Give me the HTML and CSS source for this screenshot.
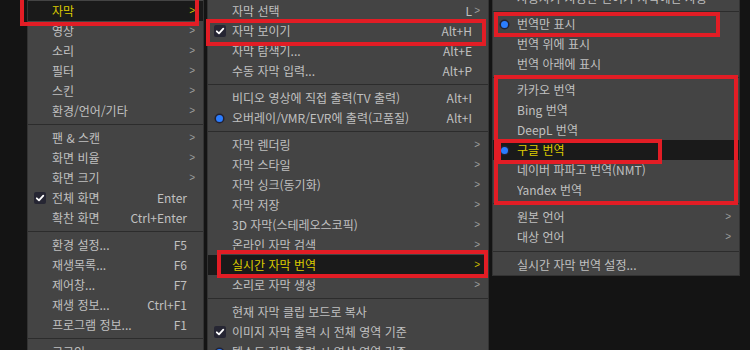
FILE: index.html
```html
<!DOCTYPE html>
<html lang="ko">
<head>
<meta charset="utf-8">
<title>PotPlayer 메뉴</title>
<link rel="stylesheet" href="styles.css">
</head>
<body>
<div class="stage">
  <div class="menu menu-main">
    <div class="item hl"><span class="mark"></span><span class="label">자막</span><span class="key"></span><span class="arrow">&gt;</span></div>
    <div class="item"><span class="mark"></span><span class="label">영상</span><span class="key"></span><span class="arrow">&gt;</span></div>
    <div class="item"><span class="mark"></span><span class="label">소리</span><span class="key"></span><span class="arrow">&gt;</span></div>
    <div class="item"><span class="mark"></span><span class="label">필터</span><span class="key"></span><span class="arrow">&gt;</span></div>
    <div class="item"><span class="mark"></span><span class="label">스킨</span><span class="key"></span><span class="arrow">&gt;</span></div>
    <div class="item"><span class="mark"></span><span class="label">환경/언어/기타</span><span class="key"></span><span class="arrow">&gt;</span></div>
    <div class="sep"></div>
    <div class="item"><span class="mark"></span><span class="label">팬 &amp; 스캔</span><span class="key"></span><span class="arrow">&gt;</span></div>
    <div class="item"><span class="mark"></span><span class="label">화면 비율</span><span class="key"></span><span class="arrow">&gt;</span></div>
    <div class="item"><span class="mark"></span><span class="label">화면 크기</span><span class="key"></span><span class="arrow">&gt;</span></div>
    <div class="item"><span class="mark"><span class="check"><svg viewBox="0 0 12 12" width="12" height="12"><path d="M2.8 6.3 L5 8.4 L9.3 3.6" fill="none" stroke="#fff" stroke-width="1.8" stroke-linecap="round" stroke-linejoin="round"/></svg></span></span><span class="label">전체 화면</span><span class="key">Enter</span><span class="arrow"></span></div>
    <div class="item"><span class="mark"></span><span class="label">확찬 화면</span><span class="key">Ctrl+Enter</span><span class="arrow"></span></div>
    <div class="sep"></div>
    <div class="item"><span class="mark"></span><span class="label">환경 설정...</span><span class="key">F5</span><span class="arrow"></span></div>
    <div class="item"><span class="mark"></span><span class="label">재생목록...</span><span class="key">F6</span><span class="arrow"></span></div>
    <div class="item"><span class="mark"></span><span class="label">제어창...</span><span class="key">F7</span><span class="arrow"></span></div>
    <div class="item"><span class="mark"></span><span class="label">재생 정보...</span><span class="key">Ctrl+F1</span><span class="arrow"></span></div>
    <div class="item"><span class="mark"></span><span class="label">프로그램 정보...</span><span class="key">F1</span><span class="arrow"></span></div>
    <div class="sep"></div>
    <div class="item"><span class="mark"></span><span class="label">로그인</span><span class="key"></span><span class="arrow"></span></div>
  </div>

  <div class="menu menu-sub">
    <div class="item"><span class="mark"></span><span class="label">자막 선택</span><span class="key">L</span><span class="arrow">&gt;</span></div>
    <div class="item"><span class="mark"><span class="check"><svg viewBox="0 0 12 12" width="12" height="12"><path d="M2.8 6.3 L5 8.4 L9.3 3.6" fill="none" stroke="#fff" stroke-width="1.8" stroke-linecap="round" stroke-linejoin="round"/></svg></span></span><span class="label">자막 보이기</span><span class="key">Alt+H</span><span class="arrow"></span></div>
    <div class="item"><span class="mark"></span><span class="label">자막 탐색기...</span><span class="key">Alt+E</span><span class="arrow"></span></div>
    <div class="item"><span class="mark"></span><span class="label">수동 자막 입력...</span><span class="key">Alt+P</span><span class="arrow"></span></div>
    <div class="sep"></div>
    <div class="item"><span class="mark"></span><span class="label">비디오 영상에 직접 출력(TV 출력)</span><span class="key">Alt+I</span><span class="arrow"></span></div>
    <div class="item"><span class="mark"><span class="dot"></span></span><span class="label">오버레이/VMR/EVR에 출력(고품질)</span><span class="key">Alt+I</span><span class="arrow"></span></div>
    <div class="sep"></div>
    <div class="item"><span class="mark"></span><span class="label">자막 렌더링</span><span class="key"></span><span class="arrow">&gt;</span></div>
    <div class="item"><span class="mark"></span><span class="label">자막 스타일</span><span class="key"></span><span class="arrow">&gt;</span></div>
    <div class="item"><span class="mark"></span><span class="label">자막 싱크(동기화)</span><span class="key"></span><span class="arrow">&gt;</span></div>
    <div class="item"><span class="mark"></span><span class="label">자막 저장</span><span class="key"></span><span class="arrow">&gt;</span></div>
    <div class="item"><span class="mark"></span><span class="label">3D 자막(스테레오스코픽)</span><span class="key"></span><span class="arrow">&gt;</span></div>
    <div class="item"><span class="mark"></span><span class="label">온라인 자막 검색</span><span class="key"></span><span class="arrow">&gt;</span></div>
    <div class="item hl"><span class="mark"></span><span class="label">실시간 자막 번역</span><span class="key"></span><span class="arrow">&gt;</span></div>
    <div class="item"><span class="mark"></span><span class="label">소리로 자막 생성</span><span class="key"></span><span class="arrow">&gt;</span></div>
    <div class="sep"></div>
    <div class="item"><span class="mark"></span><span class="label">현재 자막 클립 보드로 복사</span><span class="key"></span><span class="arrow"></span></div>
    <div class="item"><span class="mark"><span class="check"><svg viewBox="0 0 12 12" width="12" height="12"><path d="M2.8 6.3 L5 8.4 L9.3 3.6" fill="none" stroke="#fff" stroke-width="1.8" stroke-linecap="round" stroke-linejoin="round"/></svg></span></span><span class="label">이미지 자막 출력 시 전체 영역 기준</span><span class="key"></span><span class="arrow"></span></div>
    <div class="item"><span class="mark"><span class="dot"></span></span><span class="label">텍스트 자막 출력 시 영상 영역 기준</span><span class="key"></span><span class="arrow"></span></div>
  </div>

  <div class="menu menu-trans">
    <div class="item"><span class="mark"></span><span class="label">사용자가 지정한 언어가 자막에만 사용</span><span class="key"></span><span class="arrow"></span></div>
    <div class="sep sep-6"></div>
    <div class="item"><span class="mark"><span class="dot"></span></span><span class="label">번역만 표시</span><span class="key"></span><span class="arrow"></span></div>
    <div class="item"><span class="mark"></span><span class="label">번역 위에 표시</span><span class="key"></span><span class="arrow"></span></div>
    <div class="item"><span class="mark"></span><span class="label">번역 아래에 표시</span><span class="key"></span><span class="arrow"></span></div>
    <div class="sep sep-6"></div>
    <div class="item"><span class="mark"></span><span class="label">카카오 번역</span><span class="key"></span><span class="arrow"></span></div>
    <div class="item"><span class="mark"></span><span class="label">Bing 번역</span><span class="key"></span><span class="arrow"></span></div>
    <div class="item"><span class="mark"></span><span class="label">DeepL 번역</span><span class="key"></span><span class="arrow"></span></div>
    <div class="item hl"><span class="mark"><span class="dot"></span></span><span class="label">구글 번역</span><span class="key"></span><span class="arrow"></span></div>
    <div class="item"><span class="mark"></span><span class="label">네이버 파파고 번역(NMT)</span><span class="key"></span><span class="arrow"></span></div>
    <div class="item"><span class="mark"></span><span class="label">Yandex 번역</span><span class="key"></span><span class="arrow"></span></div>
    <div class="sep"></div>
    <div class="item"><span class="mark"></span><span class="label">원본 언어</span><span class="key"></span><span class="arrow">&gt;</span></div>
    <div class="item"><span class="mark"></span><span class="label">대상 언어</span><span class="key"></span><span class="arrow">&gt;</span></div>
    <div class="sep sep-8"></div>
    <div class="item"><span class="mark"></span><span class="label">실시간 자막 번역 설정...</span><span class="key"></span><span class="arrow"></span></div>
  </div>

  <div class="callout callout-a"></div>
  <div class="callout callout-b"></div>
  <div class="callout callout-c"></div>
  <div class="callout callout-d"></div>
  <div class="callout callout-e"></div>
  <div class="callout callout-f"></div>
</div>
</body>
</html>
```

FILE: styles.css
```css
html, body {
  margin: 0;
  padding: 0;
}

body {
  width: 750px;
  height: 350px;
  overflow: hidden;
  background: #141414;
  font-family: "Noto Sans CJK KR", "Noto Sans", sans-serif;
  font-size: 12px;
  color: #c0c0c0;
}

.stage {
  position: relative;
  display: flex;
  align-items: flex-start;
  gap: 3px;
  padding-left: 27px;
  height: 350px;
}

.menu {
  box-sizing: border-box;
  background: #444444;
  border: 1px solid #333333;
  border-top: none;
  flex: none;
}

.menu-main {
  width: 177px;
}

.menu-sub {
  width: 282px;
}

.menu-trans {
  width: 248px;
  margin-top: -12px;
}

.item {
  display: grid;
  grid-template-columns: 24px 1fr auto 16px;
  align-items: center;
  height: 20px;
  line-height: 20px;
  white-space: nowrap;
}

.menu-main > .item:first-child,
.menu-sub > .item:first-child {
  margin-top: 1px;
}

.item.hl {
  background: #1a1a1a;
  color: #dccb00;
}

.mark {
  display: flex;
  align-items: center;
  justify-content: center;
  height: 20px;
}

.label {
  overflow: hidden;
}

.key {
  text-align: right;
  padding-left: 12px;
}

.arrow {
  text-align: right;
  padding-right: 8px;
  font-family: "Liberation Sans", sans-serif;
  font-size: 10px;
  color: #9c9c9c;
}

.item.hl .arrow {
  color: #c9b900;
}

.check {
  display: block;
  width: 12px;
  height: 12px;
  border-radius: 2px;
  background: #262633;
  margin-left: -1px;
}

.check svg {
  display: block;
}

.dot {
  display: block;
  width: 7px;
  height: 7px;
  border-radius: 50%;
  background: #2b7dff;
  box-shadow: 0 0 0 1.5px #222233;
  margin-left: -1px;
}

.sep {
  height: 7px;
  display: flex;
  align-items: center;
}

.sep.sep-6 {
  height: 6px;
}

.sep.sep-8 {
  height: 8px;
}

.sep::before {
  content: "";
  display: block;
  width: 100%;
  height: 1px;
  background: #2c2c2c;
}

.callout {
  position: absolute;
  box-sizing: border-box;
  border: 4px solid #e21d25;
  pointer-events: none;
}

.callout-a { left: 20px;  top: -6px;  width: 179px; height: 32px; }
.callout-b { left: 206px; top: 19px;  width: 280px; height: 27px; }
.callout-c { left: 217px; top: 250px; width: 271px; height: 28px; }
.callout-d { left: 494px; top: 12px;  width: 226px; height: 25px; }
.callout-e { left: 494px; top: 75px;  width: 244px; height: 130px; }
.callout-f { left: 497px; top: 139px; width: 165px; height: 25px; }
```
